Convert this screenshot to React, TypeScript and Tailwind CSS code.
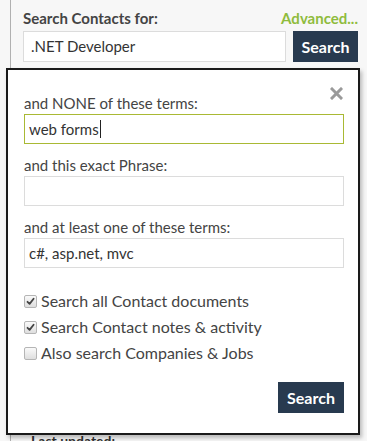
import React from "react";

function Check({ checked }: { checked: boolean }) {
  return (
    <span className="flex h-[13px] w-[13px] shrink-0 items-center justify-center rounded-[2px] border border-[#b5b5b5] bg-gradient-to-b from-[#fafafa] to-[#dedede]">
      {checked && (
        <svg width="9" height="9" viewBox="0 0 9 9">
          <path d="M1.5 4.8 L3.6 6.9 L7.6 1.8" fill="none" stroke="#444" strokeWidth="1.8" strokeLinecap="round" strokeLinejoin="round" />
        </svg>
      )}
    </span>
  );
}

export default function App() {
  const font = { fontFamily: '"Lato", "Liberation Sans", sans-serif' };
  return (
    <div className="relative h-[441px] w-[367px] overflow-hidden bg-[#f7f7f7]" style={font}>
      <div className="ml-[10px] flex h-full flex-col border-l border-[#b0b0b0] pl-[12px] pr-[9px] pt-[8px]">
        <div className="flex h-[21px] items-center justify-between">
          <span className="text-[15px] font-bold text-[#444]">Search Contacts for:</span>
          <span className="text-[15px] font-bold text-[#8fbc3d]">Advanced...</span>
        </div>
        <div className="mt-[2px] flex h-[31px] gap-[7px]">
          <div className="flex w-[263px] items-center border border-[#dcdcdc] bg-white pl-[7px] text-[15px] text-[#333]">
            .NET Developer
          </div>
          <div className="flex w-[65px] items-center justify-center bg-[#283a4f] text-[16px] font-bold text-white">
            Search
          </div>
        </div>
        <div className="mt-auto translate-y-[8px] pl-[8px] text-[14px] font-bold leading-[16px] text-[#333]">Last updated:</div>
      </div>

      <div className="absolute left-[6px] top-[68px] h-[367px] w-[354px] border-2 border-[#1a1a1a] bg-white pl-[16px] pr-[14px] shadow-[2px_3px_4px_rgba(0,0,0,0.25)]">
        <div className="absolute right-[15px] top-[17px]">
          <svg width="13" height="13" viewBox="0 0 13 13">
            <path d="M2 2 L11 11 M11 2 L2 11" stroke="#9a9a9a" strokeWidth="3" strokeLinecap="square" />
          </svg>
        </div>
        <div className="pt-[23px]">
          <div className="h-[21px] text-[15px] leading-[20px] text-[#444]">and NONE of these terms:</div>
          <div className="flex h-[30px] items-center border border-[#a9b934] bg-white pl-[4px] text-[15px] text-[#333]">
            web forms<span className="ml-[1px] inline-block h-[18px] w-px bg-[#222]" />
          </div>
          <div className="mt-[11px] h-[21px] text-[15px] leading-[20px] text-[#444]">and this exact Phrase:</div>
          <div className="h-[30px] border border-[#dcdcdc] bg-white" />
          <div className="mt-[11px] h-[21px] text-[15px] leading-[20px] text-[#444]">and at least one of these terms:</div>
          <div className="flex h-[30px] items-center border border-[#dcdcdc] bg-white pl-[4px] text-[15px] text-[#333]">
            c#, asp.net, mvc
          </div>
          <div className="mt-[20px] flex flex-col">
            <label className="flex h-[26px] items-center gap-[4px] text-[16px] text-[#444]">
              <Check checked />
              Search all Contact documents
            </label>
            <label className="flex h-[26px] items-center gap-[4px] text-[16px] text-[#444]">
              <Check checked />
              Search Contact notes &amp; activity
            </label>
            <label className="flex h-[26px] items-center gap-[4px] text-[16px] text-[#444]">
              <Check checked={false} />
              Also search Companies &amp; Jobs
            </label>
          </div>
          <div className="mt-[16px] flex justify-end">
            <div className="flex h-[31px] w-[66px] items-center justify-center bg-[#283a4f] text-[16px] font-bold text-white">
              Search
            </div>
          </div>
        </div>
      </div>
    </div>
  );
}
